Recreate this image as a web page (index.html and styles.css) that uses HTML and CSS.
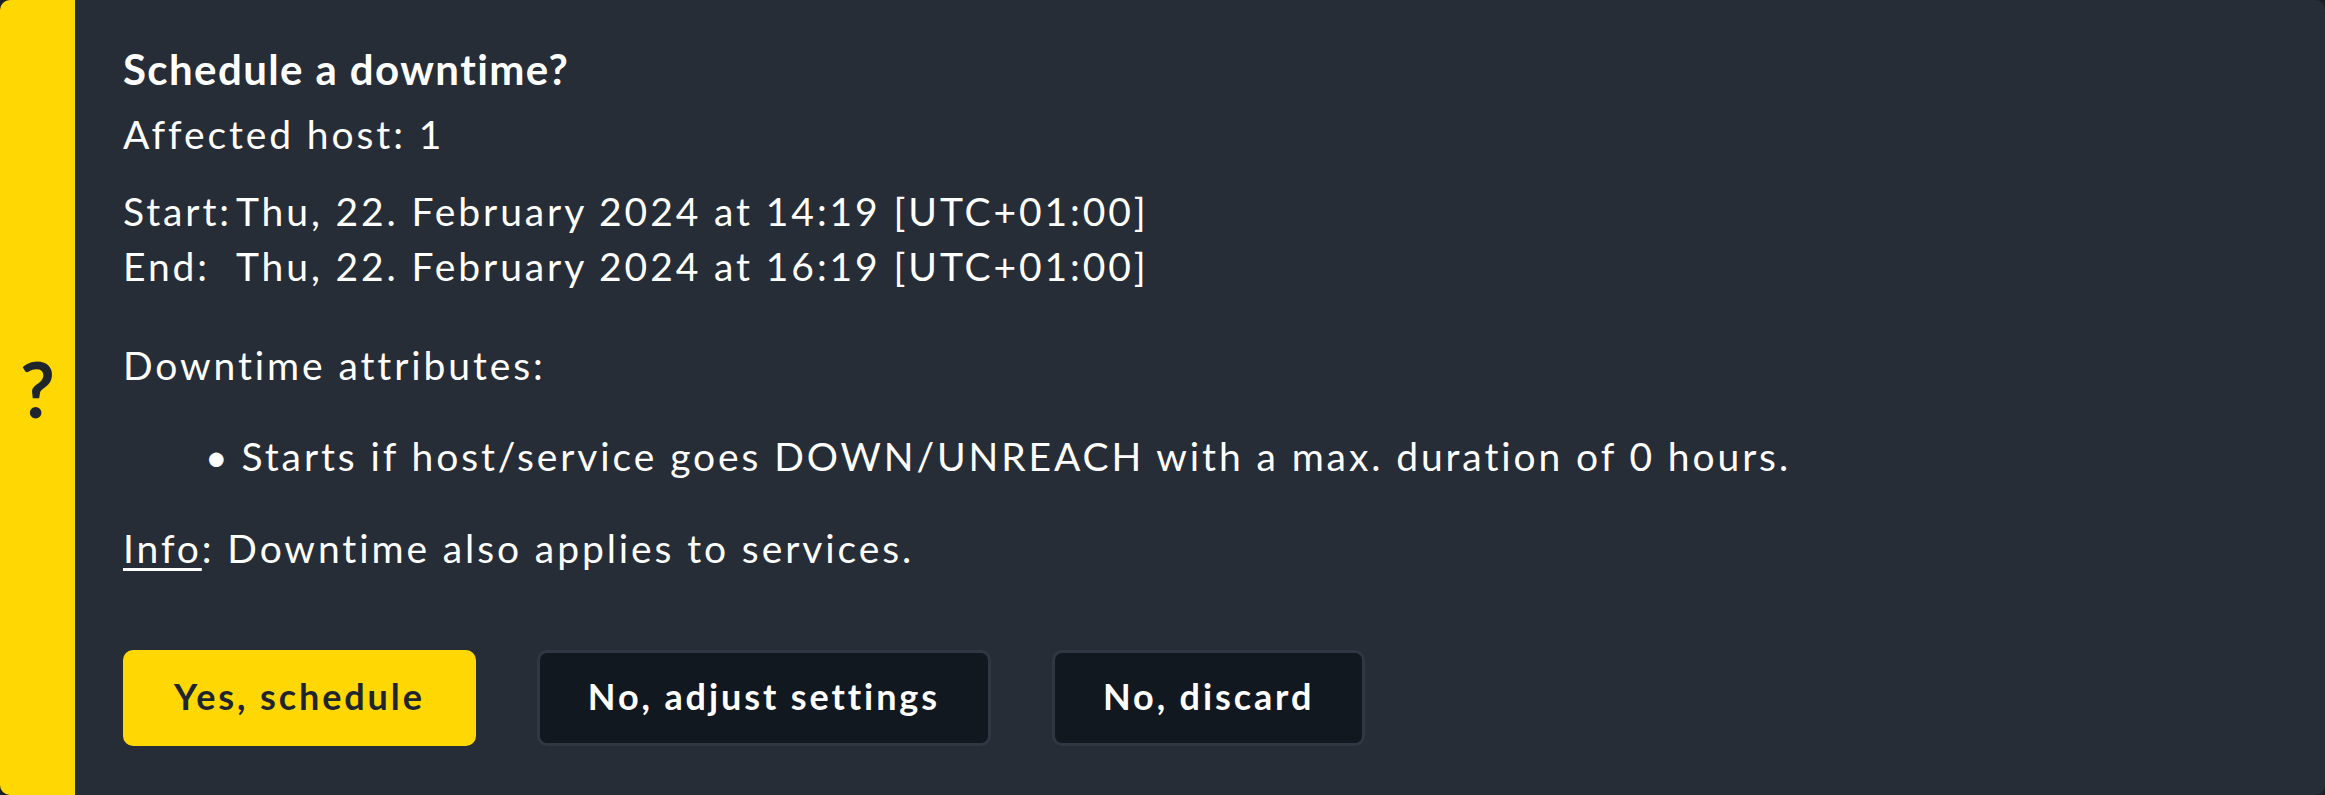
FILE: index.html
```html
<!DOCTYPE html>
<html lang="en">
<head>
<meta charset="utf-8">
<title>Schedule a downtime?</title>
<link rel="stylesheet" href="styles.css">
</head>
<body>
<div class="card">
  <div class="icon-bar"><span class="icon">?</span></div>
  <div class="content">
    <h2 class="title">Schedule a downtime?</h2>
    <div class="affected">Affected host: 1</div>
    <div class="times">
      <span class="label">Start:</span><span class="value">Thu, 22. February 2024 at 14:19 [UTC+01:00]</span>
      <span class="label">End:</span><span class="value">Thu, 22. February 2024 at 16:19 [UTC+01:00]</span>
    </div>
    <div class="attr-title">Downtime attributes:</div>
    <ul class="attr-list">
      <li>Starts if host/service goes DOWN/UNREACH with a max. duration of 0 hours.</li>
    </ul>
    <div class="info"><span class="info-label">Info</span>: Downtime also applies to services.</div>
    <div class="buttons">
      <button class="btn btn-primary">Yes, schedule</button>
      <button class="btn btn-dark">No, adjust settings</button>
      <button class="btn btn-dark">No, discard</button>
    </div>
  </div>
</div>
</body>
</html>
```

FILE: styles.css
```css
html, body {
  margin: 0;
  padding: 0;
}
body {
  background: #1b2027;
  font-family: Lato, "Noto Sans", sans-serif;
  font-variant-ligatures: none;
  color: #ffffff;
}
.card {
  display: flex;
  height: 795px;
  border-radius: 10px;
  overflow: hidden;
  background: #262d37;
}
.icon-bar {
  width: 75px;
  flex: none;
  background: #ffd703;
  display: flex;
  align-items: center;
  justify-content: center;
}
.icon {
  font-family: Lato, sans-serif;
  font-weight: 700;
  font-size: 76px;
  line-height: 1;
  color: #1e252d;
  padding-bottom: 18px;
}
.content {
  flex: 1;
  padding: 44px 0 0 48px;
}
.title {
  margin: 0;
  font-size: 42px;
  line-height: 50px;
  font-weight: 700;
  letter-spacing: 1.4px;
}
.affected,
.times,
.attr-title,
.attr-list,
.info {
  font-size: 39px;
  letter-spacing: 2.9px;
}
.affected {
  margin-top: 17px;
  line-height: 47px;
}
.times {
  margin-top: 26px;
  display: grid;
  grid-template-columns: auto 1fr;
  column-gap: 4px;
  line-height: 55px;
}
.attr-title {
  margin-top: 48px;
  line-height: 47px;
}
.attr-list {
  list-style: none;
  margin: 44px 0 0 0;
  padding: 0 0 0 82px;
  line-height: 47px;
}
.attr-list li::before {
  content: "\2022";
  margin-right: 11px;
}
.info {
  margin-top: 45px;
  line-height: 47px;
}
.info-label {
  text-decoration: underline;
  text-decoration-thickness: 3px;
  text-underline-offset: 5px;
}
.buttons {
  margin-top: 78px;
  display: flex;
  gap: 61px;
}
.btn {
  height: 96px;
  padding: 0 48px 5px;
  border-radius: 10px;
  font-family: Lato, sans-serif;
  font-weight: 700;
  font-size: 36px;
  letter-spacing: 2.9px;
  cursor: pointer;
}
.btn-primary {
  background: #ffd703;
  color: #1e252d;
  border: 3px solid #ffd703;
}
.btn-dark {
  background: #121820;
  color: #ffffff;
  border: 3px solid #2f3743;
}
```
